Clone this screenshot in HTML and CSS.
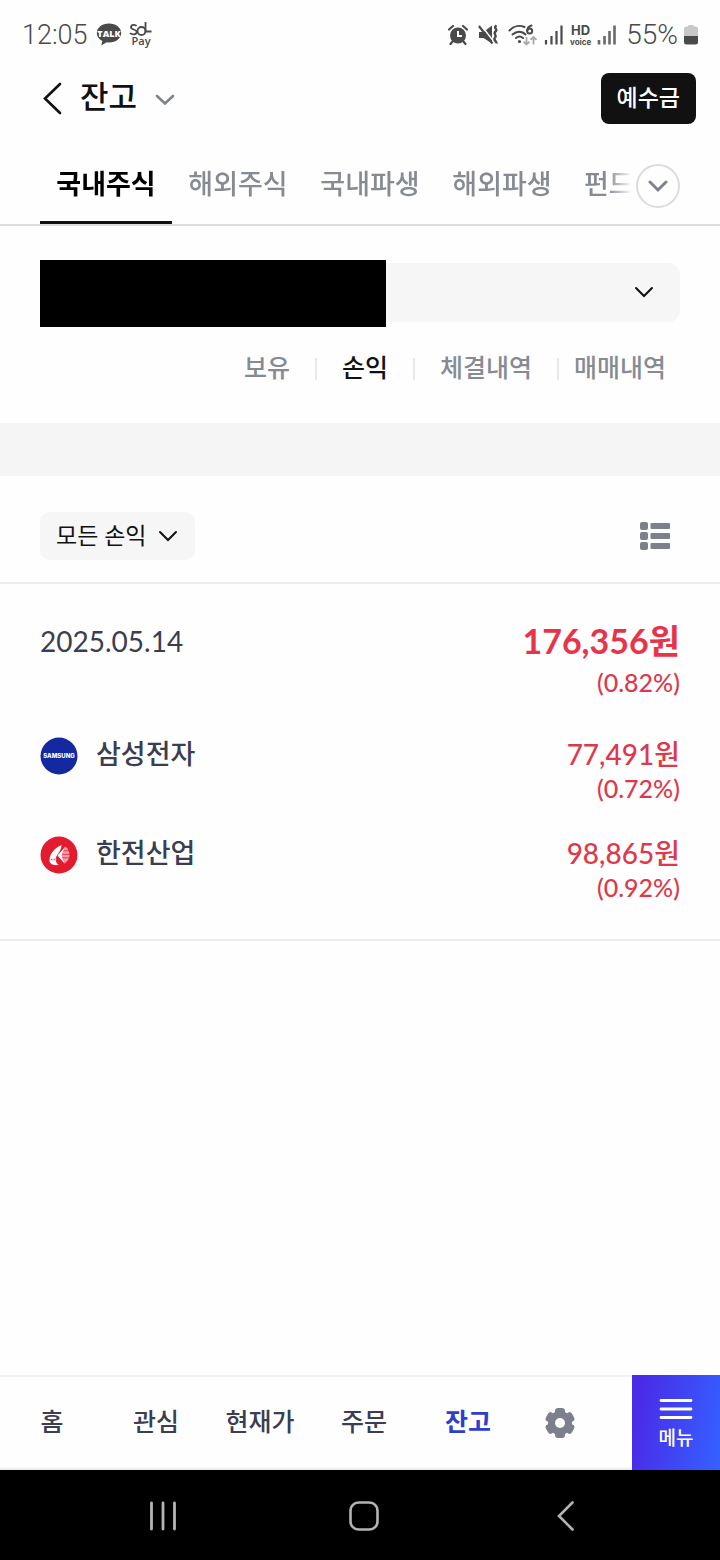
FILE: index.html
```html
<!DOCTYPE html>
<html lang="ko">
<head>
<meta charset="utf-8">
<meta name="viewport" content="width=device-width, initial-scale=1">
<title>잔고</title>
<link rel="stylesheet" href="styles.css">
</head>
<body>
<div class="app">
  <div class="status">
    <div class="status-group">
      <span class="status-text">12:05</span>
      <svg class="icon-talk" width="26" height="24" viewBox="0 0 26 24" aria-hidden="true">
        <path d="M13 0.5C6 0.5 0.8 4.700 0.8 10c0 3.400 2.200 6.300 5.500 8L5.300 22.600l5.400-3.300c.8.1 1.500.2 2.300.2 7 0 12.200-4.200 12.200-9.500S20 .5 13 .5z" fill="#4a4a4a"/>
        <text x="13" y="13.500" text-anchor="middle" class="talk-label">TALK</text>
      </svg>
      <svg class="icon-sol" width="24" height="28" viewBox="0 0 24 28" aria-hidden="true">
        <g fill="none" stroke="#4a4a4a" stroke-width="1.800">
          <path d="M7.500 5C6.500 3.300 2 3.200 2 6.200c0 2.800 5.700 1.800 5.700 4.900 0 2.900-5 2.900-6.700.9"/>
          <circle cx="12.500" cy="10" r="4"/>
          <path d="M16.500 1v9.500h6"/>
        </g>
        <text x="12" y="24" text-anchor="middle" class="pay-label">Pay</text>
      </svg>
    </div>
    <div class="status-group">
      <svg width="20" height="22" viewBox="0 0 20 22" aria-hidden="true">
        <circle cx="10" cy="11.500" r="8" fill="#4a4a4a"/>
        <path d="M1 5.500L5 2M19 5.500L15 2M4.500 17.500L2.500 20M15.500 17.500l2 2.500" stroke="#4a4a4a" stroke-width="2.200" stroke-linecap="round" fill="none"/>
        <path d="M10 7v5h4" stroke="#fff" stroke-width="2" fill="none"/>
      </svg>
      <svg class="icon-mute" width="21" height="22" viewBox="0 0 21 22" aria-hidden="true">
        <path d="M1 8h4.500L14 1.500v18L5.500 14H1z" fill="#4a4a4a"/>
        <path d="M2.500 .5l14 18" stroke="#fff" stroke-width="1.500"/>
        <path d="M.9 2l13.600 17.500" stroke="#4a4a4a" stroke-width="2.200"/>
        <path d="M18.500 1.500c-4 2.500 2 3.500-1 6s2 3.500-.5 6 2 3.500 1.500 6" stroke="#4a4a4a" stroke-width="2.400" fill="none"/>
      </svg>
      <svg class="icon-wifi" width="30" height="22" viewBox="0 0 30 22" aria-hidden="true">
        <g fill="none" stroke="#4a4a4a" stroke-width="2" stroke-linecap="round">
          <path d="M1.500 6.500C6 1.500 12 1 16.500 3"/>
          <path d="M4.500 10.500c4-3.800 9.500-3.800 13 0"/>
          <path d="M8 14c2.200-1.900 4.800-1.900 7 0"/>
          <path d="M23.500 1.500c-2.800.8-4.300 2.800-4.300 5.500"/>
          <circle cx="21.700" cy="7" r="2.500"/>
        </g>
        <circle cx="11.500" cy="17.500" r="1.600" fill="#4a4a4a"/>
        <path d="M18.500 13v7.500m-3-2.800l3 2.800 3-2.800M25.500 20.500V13m-3 2.800l3-2.800 3 2.800" stroke="#a9a9a9" stroke-width="1.800" fill="none"/>
      </svg>
      <svg class="icon-signal" width="20" height="20" viewBox="0 0 20 20" aria-hidden="true">
        <path d="M2 15v4.500M7.500 11v8.500M12.500 6v13.500M17.500.5v19" stroke="#4a4a4a" stroke-width="2.200"/>
      </svg>
      <span class="hd"><span class="hd-top">HD</span><span class="hd-bottom">voice</span></span>
      <svg class="icon-signal" width="20" height="20" viewBox="0 0 20 20" aria-hidden="true">
        <path d="M2 15v4.500M7.500 11v8.500M12.500 6v13.500M17.500.5v19" stroke="#6a6a6a" stroke-width="2.600"/>
      </svg>
      <span class="status-text battery-text">55%</span>
      <svg class="icon-battery" width="14" height="20" viewBox="0 0 14 20" aria-hidden="true">
        <path d="M0 11V4q0-2.500 2.500-2.500H4Q4 0 5.500 0h3Q10 0 10 1.500h1.500Q14 1.500 14 4v7z" fill="#c8c8c8"/>
        <path d="M0 11h14v6q0 2.500-2.500 2.500h-9Q0 19.500 0 17z" fill="#4a4a4a"/>
      </svg>
    </div>
  </div>

  <header class="header">
    <button class="icon-button" type="button" aria-label="뒤로">
      <svg width="22" height="34" viewBox="0 0 22 34"><path d="M20 3L5 17.500 20 32" fill="none" stroke="#111" stroke-width="2.600" stroke-linecap="round"/></svg>
    </button>
    <h1 class="title">잔고</h1>
    <button class="icon-button title-toggle" type="button" aria-label="화면 선택">
      <svg width="20" height="12" viewBox="0 0 20 12"><path d="M2 2l8 7.500L18 2" fill="none" stroke="#7d828d" stroke-width="2.600" stroke-linecap="round"/></svg>
    </button>
    <button class="deposit" type="button">예수금</button>
  </header>

  <div class="tabs">
    <nav class="tab-list">
      <a class="tab tab-active" href="#domestic" aria-current="page">국내주식</a>
      <a class="tab" href="#overseas">해외주식</a>
      <a class="tab" href="#domestic-derivatives">국내파생</a>
      <a class="tab" href="#overseas-derivatives">해외파생</a>
      <a class="tab" href="#fund">펀드</a>
    </nav>
    <button class="tab-more" type="button" aria-label="탭 더보기">
      <svg width="20" height="14" viewBox="0 0 20 14"><path d="M2 3l8 8 8-8" fill="none" stroke="#7d828d" stroke-width="3" stroke-linecap="round"/></svg>
    </button>
  </div>

  <section class="account">
    <div class="account-field">
      <select class="account-select" aria-label="계좌 선택"><option></option></select>
      <span class="account-mask"></span>
      <svg class="account-arrow" width="20" height="12" viewBox="0 0 20 12" aria-hidden="true"><path d="M2 2l8 8 8-8" fill="none" stroke="#111" stroke-width="2" stroke-linecap="round"/></svg>
    </div>
    <nav class="views">
      <a class="view" href="#holdings">보유</a>
      <a class="view view-active" href="#profit" aria-current="page">손익</a>
      <a class="view" href="#executions">체결내역</a>
      <a class="view" href="#trades">매매내역</a>
    </nav>
  </section>

  <main class="main">
    <div class="filter-row">
      <div class="filter">
        <select class="filter-select" aria-label="손익 구분"><option>모든 손익</option></select>
        <svg class="filter-arrow" width="20" height="12" viewBox="0 0 20 12" aria-hidden="true"><path d="M2 2l8 8 8-8" fill="none" stroke="#111" stroke-width="2" stroke-linecap="round"/></svg>
      </div>
      <button class="icon-button" type="button" aria-label="목록 보기">
        <svg width="30" height="28" viewBox="0 0 30 28" fill="#7b808c">
          <rect x="0" y="0" width="8" height="8" rx="2"/><rect x="10.500" y="1" width="19.500" height="6" rx="1"/>
          <rect x="0" y="10" width="8" height="8" rx="2"/><rect x="10.500" y="11" width="19.500" height="6" rx="1"/>
          <rect x="0" y="20" width="8" height="8" rx="2"/><rect x="10.500" y="21" width="19.500" height="6" rx="1"/>
        </svg>
      </button>
    </div>

    <section class="day">
      <div class="entry">
        <h2 class="date">2025.05.14</h2>
        <div class="values">
          <strong class="total">176,356원</strong>
          <span class="rate">(0.82%)</span>
        </div>
      </div>
      <ul class="stocks">
        <li class="entry">
          <div class="stock">
            <svg width="38" height="38" viewBox="0 0 38 38" aria-hidden="true">
              <circle cx="19" cy="19" r="18.500" fill="#1428a0"/>
              <text x="19" y="21" text-anchor="middle" class="samsung-label">SAMSUNG</text>
            </svg>
            <span class="name">삼성전자</span>
          </div>
          <div class="values"><span class="amount">77,491원</span><span class="rate">(0.72%)</span></div>
        </li>
        <li class="entry">
          <div class="stock">
            <svg width="38" height="38" viewBox="0 0 38 38" aria-hidden="true">
              <circle cx="19" cy="19" r="18.500" fill="#e31b2f"/>
              <path d="M21.500 9C14.500 12 9.500 18 9.500 24.500c0 3.500 4 5.200 9 4.500-3.500-3.200-3.500-7-1-10.500 1.500-2 4-5.500 4-9.500z" fill="#fff"/>
              <path d="M25.500 10.500L17.500 19.500l7.500 8.500-3.300-8.500z" fill="#fff"/>
              <path d="M25.500 10.500c2.500 2 4 5 4 8.500s-1.500 5.500-4.500 8l-3.300-7.500z" fill="#f3a0a8"/>
              <path d="M23.500 14.800h6M22 18.300h8M22.500 21.800h7" stroke="#e31b2f" stroke-width=".8"/>
              <path d="M11 23.500h6" stroke="#d9606c" stroke-width="1.500" stroke-dasharray="1.500 1"/>
            </svg>
            <span class="name">한전산업</span>
          </div>
          <div class="values"><span class="amount">98,865원</span><span class="rate">(0.92%)</span></div>
        </li>
      </ul>
    </section>
  </main>

  <nav class="bottom">
    <a class="bottom-link" href="#home">홈</a>
    <a class="bottom-link" href="#watch">관심</a>
    <a class="bottom-link" href="#price">현재가</a>
    <a class="bottom-link" href="#order">주문</a>
    <a class="bottom-link bottom-active" href="#balance" aria-current="page">잔고</a>
    <button class="icon-button settings" type="button" aria-label="설정">
      <svg width="32" height="32" viewBox="0 0 32 32">
        <g fill="#7b808c">
          <circle cx="16" cy="16" r="12"/>
          <rect id="tooth" x="11" y="1" width="10" height="30" rx="3"/>
          <use href="#tooth" transform="rotate(60 16 16)"/>
          <use href="#tooth" transform="rotate(120 16 16)"/>
        </g>
        <circle cx="16" cy="16" r="5" fill="#fff"/>
      </svg>
    </button>
    <button class="menu" type="button">
      <svg width="34" height="22" viewBox="0 0 34 22" aria-hidden="true"><path d="M2 2.500h30M2 11h30M2 19.500h30" stroke="#fff" stroke-width="2.800" stroke-linecap="round"/></svg>
      메뉴
    </button>
  </nav>

  <div class="system">
    <button class="icon-button" type="button" aria-label="최근 앱">
      <svg width="28" height="30" viewBox="0 0 28 30"><path d="M2.500 2v26M14 2v26M25.500 2v26" stroke="#b4b4b4" stroke-width="2.800" stroke-linecap="round"/></svg>
    </button>
    <button class="icon-button" type="button" aria-label="홈 화면">
      <svg width="30" height="30" viewBox="0 0 30 30"><rect x="1.500" y="1.500" width="27" height="27" rx="8" fill="none" stroke="#b4b4b4" stroke-width="2.600"/></svg>
    </button>
    <button class="icon-button" type="button" aria-label="이전">
      <svg width="18" height="30" viewBox="0 0 18 30"><path d="M16.500 1.500L3 15l13.500 13.500" fill="none" stroke="#b4b4b4" stroke-width="2.600" stroke-linecap="round"/></svg>
    </button>
  </div>
</div>
</body>
</html>
```
FILE: styles.css
```css
* { box-sizing: border-box; }

body {
  margin: 0;
  background: #fefefe;
  color: #111;
  font-family: Lato, "Noto Sans CJK KR", sans-serif;
  font-size: 25px;
}

a { color: inherit; text-decoration: none; }

button, select {
  font-family: inherit;
  border: 0;
  margin: 0;
  appearance: none;
}

svg { display: block; flex: none; }

.app {
  display: flex;
  flex-direction: column;
  min-height: 100vh;
}

.icon-button {
  display: flex;
  align-items: center;
  justify-content: center;
  padding: 0;
  background: none;
}

/* Status bar */
.status {
  display: flex;
  justify-content: space-between;
  align-items: center;
  height: 68px;
  padding: 2px 22px 0;
  color: #4a4a4a;
}

.status-group { display: flex; align-items: center; }

.status-text {
  font-family: Roboto, sans-serif;
  font-size: 27px;
  font-weight: 300;
  line-height: 32px;
}

.battery-text {
  margin-left: 9px;
  font-size: 28px;
}

.icon-talk { margin-left: 8px; }
.icon-sol { margin-left: 7px; }
.icon-mute { margin-left: 10px; }
.icon-wifi { margin-left: 9px; }
.icon-signal { margin-left: 6px; }
.icon-battery { margin-left: 6px; }

.talk-label { font: 800 9px "Open Sans", sans-serif; fill: #fff; }
.pay-label { font: 600 11px "Open Sans", sans-serif; fill: #4a4a4a; }

.hd {
  display: flex;
  flex-direction: column;
  align-items: center;
  gap: 1px;
  margin-left: 6px;
  font-family: Inter, sans-serif;
  font-weight: 700;
}

.hd-top { font-size: 13px; line-height: 12px; }
.hd-bottom { font-size: 8px; line-height: 10px; }

/* Header */
.header {
  display: flex;
  align-items: center;
  height: 60px;
  padding: 0 24px 0 40px;
}

.title {
  margin: 0 18px;
  padding-bottom: 4px;
  font-size: 31px;
  font-weight: 500;
  line-height: 40px;
}

.title-toggle { padding-top: 4px; }

.deposit {
  margin-left: auto;
  padding: 0 16px 2px;
  border-radius: 8px;
  background: #111;
  color: #fff;
  font-size: 23px;
  font-weight: 500;
  line-height: 49px;
}

/* Market tabs */
.tabs {
  display: flex;
  align-items: center;
  padding: 16px 40px 0;
  border-bottom: 2px solid #dcdcdc;
}

.tab-list {
  display: flex;
  flex: 1;
  min-width: 0;
  overflow: hidden;
  mask-image: linear-gradient(to left, transparent 4px, #000 28px);
}

.tab {
  flex: none;
  min-width: 132px;
  padding: 2px 16px 0;
  border-bottom: 3px solid transparent;
  color: #868a93;
  font-size: 27px;
  font-weight: 500;
  line-height: 75px;
  text-align: center;
}

.tab:last-child { min-width: 0; }

.tab-active {
  border-bottom-color: #111;
  color: #000;
  font-weight: 700;
}

.tab-more {
  display: flex;
  align-items: center;
  justify-content: center;
  width: 44px;
  height: 44px;
  margin-top: 4px;
  padding: 0;
  border: 2px solid #dcdcdc;
  border-radius: 50%;
  background: #fefefe;
}

/* Account */
.account { padding: 37px 40px 43px; }

.account-field { position: relative; }

.account-select {
  display: block;
  width: 100%;
  height: 59px;
  border-radius: 12px;
  background: #f6f6f6;
}

.account-mask {
  position: absolute;
  top: -3px;
  bottom: -5px;
  left: 0;
  width: 54%;
  background: #000;
}

.account-arrow {
  position: absolute;
  top: 23px;
  right: 26px;
  pointer-events: none;
}

.views {
  display: flex;
  align-items: center;
  justify-content: flex-end;
  padding-top: 36px;
}

.view {
  padding: 0 25px 4px;
  border-left: 2px solid #e8e8e8;
  color: #868a93;
  font-weight: 500;
  line-height: 18px;
}

.view:first-child { border-left: 0; }
.view:last-child { padding: 0 14px 4px 15px; }
.view-active { color: #111; }

/* Profit list */
.main {
  flex: 1;
  border-top: 53px solid #f5f5f6;
}

.filter-row {
  display: flex;
  align-items: center;
  justify-content: space-between;
  padding: 36px 50px 22px 40px;
  border-bottom: 2px solid #ececec;
}

.filter { position: relative; }

.filter-select {
  display: block;
  height: 48px;
  padding: 0 48px 2px 16px;
  border-radius: 10px;
  background: #f6f6f6;
  color: #111;
  font-size: 23px;
}

.filter-arrow {
  position: absolute;
  top: 18px;
  right: 17px;
  pointer-events: none;
}

.day {
  padding: 35px 40px;
  border-bottom: 2px solid #ececec;
}

.entry {
  display: flex;
  align-items: flex-start;
  justify-content: space-between;
}

.date {
  margin: 0;
  color: #3b3d50;
  font-size: 28px;
  font-weight: 400;
  line-height: 44px;
}

.values {
  display: flex;
  flex-direction: column;
  align-items: flex-end;
  color: #dc3a4c;
}

.total {
  color: #e8344a;
  font-size: 34px;
  font-weight: 700;
  line-height: 44px;
}

.amount { font-size: 28px; line-height: 34px; }
.rate { font-size: 25px; line-height: 34px; }
.amount, .rate { font-weight: 500; }
.total + .rate { line-height: 38px; }

.stocks {
  display: flex;
  flex-direction: column;
  gap: 31px;
  margin: 36px 0 0;
  padding: 0;
  list-style: none;
}

.stock {
  display: flex;
  align-items: center;
  gap: 18px;
}

.name {
  padding-bottom: 4px;
  color: #3b3d50;
  font-size: 27px;
  font-weight: 500;
  line-height: 34px;
}

.samsung-label { font: 800 6px Inter, sans-serif; fill: #fff; }

/* Bottom navigation */
.bottom {
  display: flex;
  align-items: stretch;
  color: #3b3d50;
}

.bottom-link, .settings {
  border-top: 2px solid #f2f2f2;
  border-bottom: 2px solid #ececec;
}

.bottom-link {
  flex: 13 0 0;
  padding-bottom: 2px;
  text-align: center;
  font-weight: 500;
  line-height: 89px;
}

.bottom-active { color: #2f3fcb; font-weight: 700; }

.settings {
  flex: 10 0 0;
  padding-right: 32px;
}

.menu {
  display: flex;
  flex-direction: column;
  align-items: center;
  justify-content: center;
  gap: 4px;
  width: 88px;
  padding: 4px 0 0;
  background: linear-gradient(100deg, #4a2be8 10%, #355fff 95%);
  color: #fff;
  font-size: 19px;
  font-weight: 500;
  line-height: 28px;
}

/* System navigation */
.system {
  display: grid;
  grid-template-columns: repeat(3, 1fr);
  height: 90px;
  padding: 2px 54px 0 62px;
  background: #000;
}
```
